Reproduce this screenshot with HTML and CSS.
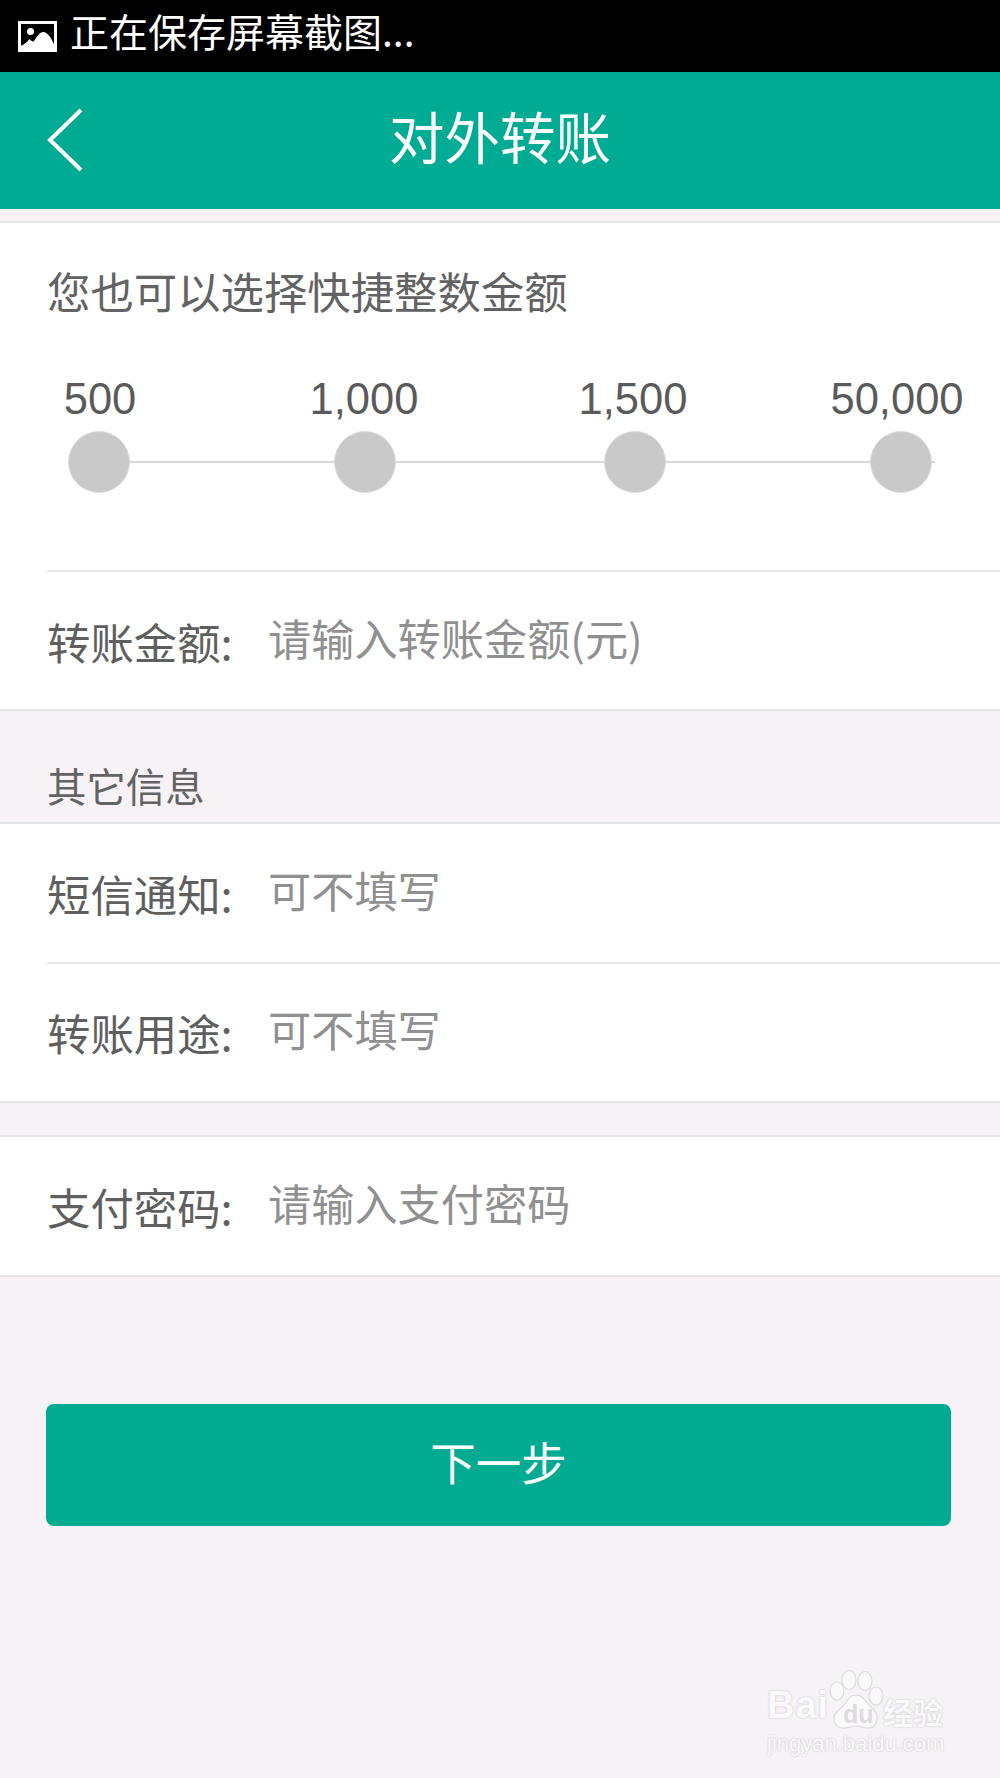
FILE: index.html
```html
<!DOCTYPE html>
<html lang="zh-CN">
<head>
<meta charset="utf-8">
<title>对外转账</title>
<link rel="stylesheet" href="styles.css">
</head>
<body>
<div class="phone">
  <div class="status">
    <svg class="status-icon" viewBox="0 0 39 31" width="39" height="31">
      <rect x="1.5" y="1.5" width="36" height="28" fill="none" stroke="#fff" stroke-width="3"/>
      <circle cx="12.5" cy="10.5" r="3.5" fill="#fff"/>
      <path d="M2 29 L2 25 C6 24 9 21 11.5 18 C13 20 15 21 16 20 C19 15 22 11 25 11 C30 11 34 18 37 26 L37 29 Z" fill="#fff"/>
    </svg>
    <span class="status-text">正在保存屏幕截图...</span>
  </div>
  <header class="nav">
    <svg class="back" viewBox="0 0 38 66" width="38" height="66">
      <path d="M35 3 L4 33 L35 63" fill="none" stroke="#fff" stroke-width="4"/>
    </svg>
    <h1 class="nav-title">对外转账</h1>
  </header>

  <section class="card card-first">
    <div class="quick-title">您也可以选择快捷整数金额</div>
    <div class="slider">
      <div class="track"></div>
      <div class="stop stop-1"><span class="amount">500</span><i class="dot"></i></div>
      <div class="stop stop-2"><span class="amount">1,000</span><i class="dot"></i></div>
      <div class="stop stop-3"><span class="amount">1,500</span><i class="dot"></i></div>
      <div class="stop stop-4"><span class="amount">50,000</span><i class="dot"></i></div>
    </div>
    <div class="row row-divided">
      <span class="label">转账金额:</span><span class="hint">请输入转账金额(元)</span>
    </div>
  </section>

  <div class="section-title">其它信息</div>

  <section class="card card-notes">
    <div class="row">
      <span class="label">短信通知:</span><span class="hint">可不填写</span>
    </div>
    <div class="row row-divided">
      <span class="label">转账用途:</span><span class="hint">可不填写</span>
    </div>
  </section>

  <section class="card card-pay">
    <div class="row">
      <span class="label">支付密码:</span><span class="hint">请输入支付密码</span>
    </div>
  </section>

  <button class="next" type="button">下一步</button>

  <div class="watermark">
    <span class="wm-bai">Bai</span>
    <svg class="wm-paw" viewBox="0 0 56 62" width="56" height="62">
      <g fill="#fbf9fb" stroke="#dddbde" stroke-width="1.2">
        <ellipse cx="9" cy="21" rx="7" ry="9"/>
        <ellipse cx="21" cy="10" rx="7" ry="9.5"/>
        <ellipse cx="37" cy="11" rx="7" ry="9.5"/>
        <ellipse cx="48" cy="26" rx="7" ry="9"/>
        <path d="M28 25 C36 25 38 34 45 39 C52 45 50 58 40 58 C34 58 33 56 28 56 C22 56 20 59 14 58 C5 57 3 46 11 40 C18 35 20 25 28 25 Z"/>
      </g>
    </svg>
    <span class="wm-du">du</span>
    <span class="wm-cn">经验</span>
    <span class="wm-url">jingyan.baidu.com</span>
  </div>
</div>
</body>
</html>
```
FILE: styles.css
```css
* { box-sizing: border-box; }
html, body { margin: 0; padding: 0; }
body {
  background: #f6f2f6;
  font-family: "Noto Sans CJK SC", "Liberation Sans", sans-serif;
}
.phone {
  position: relative;
  width: 1000px;
  height: 1778px;
  overflow: hidden;
  background: #f6f2f6;
}
.status {
  height: 72px;
  background: #000;
  display: flex;
  align-items: center;
  padding-left: 18px;
  color: #fff;
}
.status-icon { flex: none; }
.status-text {
  margin-left: 13px;
  font-size: 39px;
  line-height: 66px;
  margin-top: -12px;
}
.nav {
  position: relative;
  height: 137px;
  background: #00ab94;
  display: flex;
  align-items: center;
  justify-content: center;
}
.back { position: absolute; left: 46px; top: 35px; }
.nav-title {
  margin: 0;
  font-size: 55.5px;
  font-weight: 400;
  color: #fff;
  line-height: 134px;
  margin-top: -12px;
}
.card {
  background: #fff;
  border-top: 2px solid #e4e3e6;
  border-bottom: 2px solid #e4e3e6;
}
.card-first { margin-top: 12px; }
.card-pay { margin-top: 32px; }
.quick-title {
  padding: 36px 0 1px 47px;
  font-size: 43.4px;
  line-height: 62px;
  color: #636363;
}
.slider {
  position: relative;
  height: 249px;
}
.track {
  position: absolute;
  left: 68px;
  right: 65px;
  top: 139px;
  height: 2px;
  background: #d9d9d9;
}
.stop {
  position: absolute;
  top: 0;
  width: 200px;
  height: 172px;
}
.stop-1 { left: 0; }
.stop-2 { left: 264px; }
.stop-3 { left: 533px; }
.stop-4 { left: 797px; }
.amount {
  position: absolute;
  top: 52px;
  left: 0;
  right: 0;
  text-align: center;
  font-family: "Liberation Sans", sans-serif;
  font-size: 43.5px;
  line-height: 50px;
  color: #5a5a5a;
}
.dot {
  position: absolute;
  left: 68px;
  top: 109px;
  width: 62px;
  height: 62px;
  border-radius: 50%;
  background: #c9c9c9;
  border: 1px solid #dedede;
}
.stop-2 .dot { left: 70px; }
.stop-3 .dot { left: 71px; }
.stop-4 .dot { left: 73px; }
.row {
  height: 139px;
  margin-left: 47px;
  display: flex;
  align-items: center;
}
.row-divided { border-top: 2px solid #e8e8ea; margin-top: -1px; height: 139px; }
.card-pay .row { height: 138px; }
.label {
  flex: none;
  width: 221px;
  font-size: 43.4px;
  color: #5f5f5f;
  line-height: 60px;
  position: relative;
  top: 0;
}
.hint {
  font-size: 43.2px;
  color: #909090;
  line-height: 60px;
  position: relative;
  top: -4px;
}
.card-notes .label { top: -1px; }
.card-notes .hint { top: -5px; }
.section-title {
  height: 111px;
  padding: 47px 0 0 47px;
  font-size: 39.4px;
  line-height: 54px;
  color: #636363;
  margin-bottom: 0;
}
.next {
  display: block;
  width: 905px;
  height: 122px;
  margin: 127px 0 0 46px;
  border: none;
  border-radius: 8px;
  background: #00ab92;
  color: #fff;
  font-family: inherit;
  font-size: 45.5px;
  padding: 0 0 8px;
}
.watermark {
  position: absolute;
  left: 767px;
  top: 1670px;
  width: 180px;
  height: 88px;
  color: #fbf9fb;
  text-shadow: 0 0 2px #bdbbbe;
}
.watermark span { position: absolute; white-space: nowrap; }
.wm-bai {
  left: 0;
  top: 12px;
  font: bold 38px/46px "Liberation Sans", sans-serif;
  letter-spacing: 1px;
}
.wm-paw { position: absolute; left: 61px; top: 0; }
.wm-du {
  left: 76px;
  top: 29px;
  font: bold 25px/30px "Liberation Sans", sans-serif;
  color: #dddbde;
  text-shadow: none;
}
.wm-cn {
  left: 116px;
  top: 20px;
  font-size: 30px;
  line-height: 42px;
  font-weight: 700;
}
.wm-url {
  left: 0;
  top: 61px;
  font: 22px/26px "Liberation Sans", sans-serif;
}
```
